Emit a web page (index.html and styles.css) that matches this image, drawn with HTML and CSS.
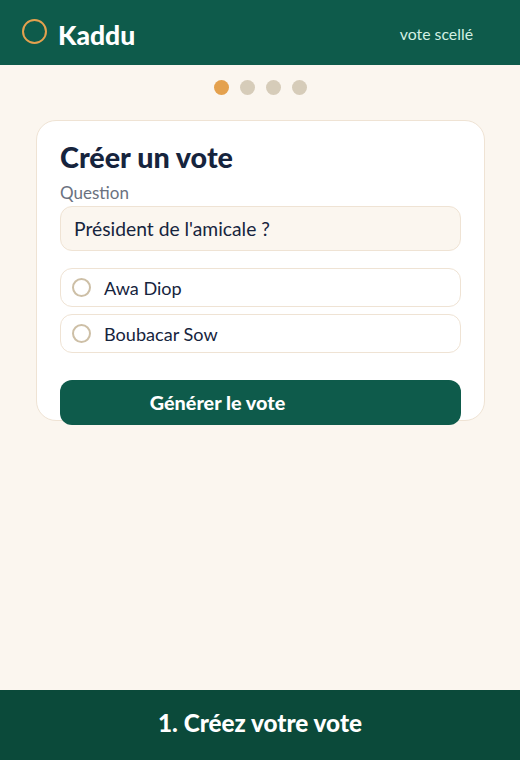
FILE: index.html
```html
<!DOCTYPE html>
<html lang="fr">
<head>
  <meta charset="UTF-8" />
  <meta name="viewport" content="width=device-width, initial-scale=1.0" />
  <title>Kaddu</title>
  <link rel="stylesheet" href="styles.css">
</head>
<body>
  <header class="topbar">
    <div class="brand">
      <span class="brand-ring"></span>
      <span class="brand-name">Kaddu</span>
    </div>
    <span class="tagline">vote scellé</span>
  </header>

  <main class="content">
    <div class="steps">
      <span class="step active"></span>
      <span class="step"></span>
      <span class="step"></span>
      <span class="step"></span>
    </div>

    <section class="card">
      <h1>Créer un vote</h1>
      <label class="field-label" for="question">Question</label>
      <div class="question" id="question">Président de l'amicale ?</div>

      <div class="options">
        <div class="option"><span class="radio"></span>Awa Diop</div>
        <div class="option"><span class="radio"></span>Boubacar Sow</div>
      </div>

      <button class="generate">Générer le vote</button>
    </section>
  </main>

  <footer class="caption">1. Créez votre vote</footer>
</body>
</html>
```

FILE: styles.css
```css
* {
  box-sizing: border-box;
}
body {
  font-family: "Lato", "Liberation Sans", sans-serif;
  margin: 0;
  height: 100vh;
  display: flex;
  flex-direction: column;
  background-color: #fbf6ef;
  color: #16243d;
}
.topbar {
  height: 65px;
  flex-shrink: 0;
  display: flex;
  align-items: center;
  justify-content: space-between;
  padding: 0 47px 0 22px;
  background-color: #0e5b4b;
}
.brand {
  display: flex;
  align-items: center;
  gap: 12px;
}
.brand-ring {
  width: 25px;
  height: 25px;
  margin-top: -2px;
  border: 2px solid #e4a14e;
  border-radius: 50%;
}
.brand-name {
  font-size: 26.5px;
  font-weight: 900;
  color: #fff;
  margin-top: 5px;
  margin-left: -1px;
}
.tagline {
  font-size: 15.8px;
  color: #d3f0e4;
  margin-top: 2px;
}
.content {
  flex: 1;
  padding: 15px 35px 0 36px;
}
.steps {
  display: flex;
  justify-content: center;
  gap: 11px;
  margin-bottom: 25px;
}
.step {
  width: 15px;
  height: 15px;
  border-radius: 50%;
  background-color: #d6ccb9;
}
.step.active {
  background-color: #e4a14e;
}
.card {
  height: 301px;
  padding: 18px 23px 0;
  background-color: #fff;
  border: 1px solid #efe3d4;
  border-radius: 20px;
}
h1 {
  margin: 0;
  font-size: 28.7px;
  line-height: 36px;
  font-weight: 900;
}
.field-label {
  display: block;
  margin-top: 7px;
  font-size: 17px;
  line-height: 22px;
  color: #6b7280;
}
.question {
  height: 45px;
  margin-top: 2px;
  padding: 0 13px 1px;
  display: flex;
  align-items: center;
  font-size: 19.3px;
  background-color: #fbf6ef;
  border: 1px solid #efe3d4;
  border-radius: 12px;
}
.options {
  margin-top: 17px;
  display: flex;
  flex-direction: column;
  gap: 7px;
}
.option {
  height: 39px;
  padding: 0 11px;
  display: flex;
  align-items: center;
  gap: 13px;
  font-size: 18.1px;
  border: 1px solid #efe3d4;
  border-radius: 12px;
}
.radio {
  width: 19px;
  height: 19px;
  border: 2px solid #cdbfa6;
  border-radius: 50%;
}
.generate {
  display: block;
  width: 401px;
  height: 45px;
  margin-top: 27px;
  padding: 0 86px 2px 0;
  font-family: inherit;
  font-size: 19.8px;
  font-weight: 900;
  color: #fff;
  background-color: #0e5b4b;
  border: none;
  border-radius: 12px;
}
.caption {
  height: 70px;
  flex-shrink: 0;
  padding-bottom: 5px;
  display: flex;
  align-items: center;
  justify-content: center;
  font-size: 24.3px;
  font-weight: 900;
  color: #fff;
  background-color: #0b4a3a;
}
```
